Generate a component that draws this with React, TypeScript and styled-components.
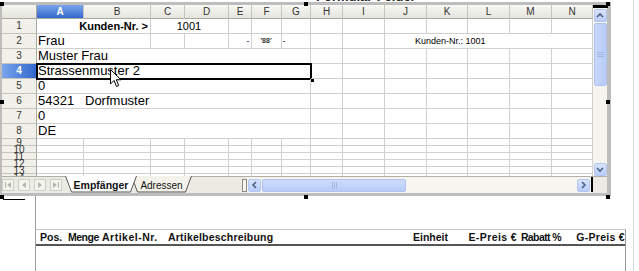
import React from 'react';
import styled, { createGlobalStyle, css } from 'styled-components';

const GlobalStyle = createGlobalStyle`
  html, body { margin: 0; padding: 0; background: #fff; }
  body { font-family: "Liberation Sans", Arial, sans-serif; }
  * { box-sizing: border-box; }
`;

const colWidths = [35, 47, 67, 34, 44, 23, 30, 29, 32, 42, 42, 41, 42, 42, 41];
const letters = 'ABCDEFGHIJKLMN'.split('');

const Page = styled.div`
  position: relative;
  width: 639px;
  height: 271px;
  overflow: hidden;
  display: flex;
  background: #fff;
`;

const Content = styled.div`
  width: 633px;
  display: flex;
  flex-direction: column;
  padding-top: 2px;
`;

const PageEdge = styled.div`
  flex: 1;
  border-left: 1px solid #d9d9d9;
`;

const Caption = styled.div`
  position: absolute;
  top: -11px;
  left: 316px;
  font-size: 13px;
  font-weight: bold;
  color: #222;
`;

const Frame = styled.div`
  position: relative;
  width: 611px;
  height: 194px;
  border-style: solid;
  border-color: #bdbdbd;
  border-width: 3px 4px 3px 2px;
  display: flex;
  flex-direction: column;
  background: #fff;
`;

const Handle = styled.span<{ $x: number; $y: number }>`
  position: absolute;
  width: 4px;
  height: 4px;
  background: #000;
  left: ${p => p.$x}px;
  top: ${p => p.$y}px;
`;

const TopArea = styled.div`
  display: flex;
  height: 171px;
`;

const Sheet = styled.div`
  display: grid;
  grid-template-columns: ${colWidths.map(w => w + 'px').join(' ')};
  grid-template-rows: 14px repeat(8, 15px) repeat(6, 7px);
  width: 591px;
  height: 171px;
  overflow: hidden;
`;

const Corner = styled.div`
  background: linear-gradient(#f6f6f2, #e4e3dc);
  border-right: 1px solid #a9a9a0;
  border-bottom: 1px solid #a9a9a0;
`;

const ColHead = styled.div<{ $active?: boolean }>`
  display: flex;
  align-items: center;
  justify-content: center;
  font-size: 10px;
  color: #333;
  background: linear-gradient(#f8f8f4, #e5e4dd);
  border-right: 1px solid #c6c5bd;
  border-bottom: 1px solid #a9a9a0;
  ${p => p.$active && css`
    background: linear-gradient(#7aa5ec, #3367cc);
    color: #fff;
    font-weight: bold;
  `}
`;

const RowHead = styled.div<{ $active?: boolean; $tight?: boolean }>`
  display: flex;
  align-items: center;
  justify-content: center;
  font-size: 10px;
  line-height: ${p => (p.$tight ? '7px' : '14px')};
  color: #333;
  background: #f1f0ea;
  border-right: 1px solid #a9a9a0;
  border-bottom: 1px solid #c6c5bd;
  ${p => p.$active && css`
    background: linear-gradient(90deg, #7aa5ec, #3367cc);
    color: #fff;
    font-weight: bold;
  `}
`;

type Align = 'left' | 'right' | 'center';

const Cell = styled.div<{
  $span?: number;
  $align?: Align;
  $bold?: boolean;
  $size?: number;
  $pad?: number;
  $noRight?: boolean;
  $selected?: boolean;
}>`
  position: relative;
  grid-column: span ${p => p.$span ?? 1};
  border-right: ${p => (p.$noRight ? 'none' : '1px solid #d0d0d0')};
  border-bottom: 1px solid #d0d0d0;
  font-size: ${p => p.$size ?? 13}px;
  font-weight: ${p => (p.$bold ? 'bold' : 'normal')};
  line-height: 14px;
  text-align: ${p => p.$align ?? 'left'};
  padding: 0 2px 0 ${p => p.$pad ?? 1}px;
  white-space: nowrap;
  color: #000;
  ${p => p.$selected && css`
    &::after {
      content: '';
      position: absolute;
      left: -1px;
      top: -1px;
      right: -2px;
      bottom: -2px;
      border: 2px solid #000;
    }
    &::before {
      content: '';
      position: absolute;
      right: -4px;
      bottom: -4px;
      width: 4px;
      height: 4px;
      background: #000;
    }
  `}
`;

const Marks = styled.span<{ $align: Align }>`
  display: block;
  font-size: 7px;
  font-weight: bold;
  text-align: ${p => p.$align};
  line-height: 14px;
  color: #333;
`;

const VScroll = styled.div`
  width: 14px;
  display: flex;
  flex-direction: column;
  align-items: center;
  background: #f5f4ee;
`;

const SplitBar = styled.div<{ $vertical?: boolean }>`
  background: #000;
  ${p => (p.$vertical ? css`width: 2px; height: 15px;` : css`width: 15px; height: 3px; margin-bottom: 1px;`)}
`;

const ArrowButton = styled.div`
  width: 13px;
  height: 13px;
  display: flex;
  align-items: center;
  justify-content: center;
  background: linear-gradient(#d8e3fd, #b9cdf9);
  border: 1px solid #b3c6f1;
  border-radius: 2px;
  flex-shrink: 0;
`;

const VThumb = styled.div`
  width: 13px;
  height: 63px;
  margin-top: 1px;
  display: flex;
  align-items: center;
  justify-content: center;
  background: linear-gradient(90deg, #c9d8fc, #b8ccf8);
  border: 1px solid #aec3f2;
  border-radius: 2px;
`;

const Track = styled.div`
  flex: 1;
`;

const TabBar = styled.div`
  height: 17px;
  display: flex;
  align-items: stretch;
  background: #ecebe3;
  border-top: 1px solid #b0afa6;
`;

const NavGroup = styled.div`
  display: flex;
  gap: 4px;
  align-items: center;
  width: 60px;
`;

const NavButton = styled.div`
  width: 12px;
  height: 12px;
  display: flex;
  align-items: center;
  justify-content: center;
  background: #f4f4ef;
  border: 1px solid #cfcec6;
`;

const Tabs = styled.div`
  display: flex;
  margin-left: 3px;
  margin-top: -1px;
`;

const Tab = styled.div<{ $active?: boolean; $w: number }>`
  position: relative;
  width: ${p => p.$w}px;
  height: 17px;
  display: flex;
  align-items: center;
  justify-content: center;
  font-size: ${p => (p.$active ? 10.5 : 10)}px;
  font-weight: ${p => (p.$active ? 'bold' : 'normal')};
  color: #111;
  z-index: ${p => (p.$active ? 2 : 1)};
  margin-left: ${p => (p.$active ? 0 : -6)}px;
  & > svg { position: absolute; left: 0; top: 0; }
  & > span { position: relative; padding-top: 1px; }
`;

const Filler = styled.div`
  flex: 1;
`;

const Splitter = styled.div`
  width: 5px;
  margin: 2px 0 1px;
  background: #f6f5f0;
  border: 1px solid #8d8d86;
`;

const HScroll = styled.div`
  width: 344px;
  display: flex;
  align-items: center;
  gap: 1px;
  padding: 0 1px;
  background: #f6f5ef;
`;

const HThumb = styled.div`
  width: 144px;
  height: 13px;
  display: flex;
  align-items: center;
  justify-content: center;
  background: linear-gradient(#cddbfc, #b9ccf8);
  border: 1px solid #aec3f2;
  border-radius: 2px;
`;

const BottomCorner = styled.div`
  width: 14px;
  background: #ecebe3;
`;

const Lower = styled.div`
  flex: 1;
  display: flex;
`;

const Margin = styled.div`
  width: 35px;
  padding: 3px 0 0 3px;
`;

const Tick = styled.div`
  width: 22px;
  height: 1px;
  background: #000;
`;

const Body = styled.div`
  flex: 1;
  border-left: 1px solid #9c9c9c;
  display: flex;
  flex-direction: column;
  padding-right: 7px;
`;

const Table = styled.div`
  margin-top: 33px;
  flex: 1;
  border-top: 1px solid #c4c4c4;
  border-right: 1px solid #9a9a9a;
`;

const HeaderRow = styled.div`
  display: flex;
  height: 16px;
  align-items: center;
  padding-left: 4px;
  border-bottom: 2px solid #555;
`;

const HeadCell = styled.div<{ $w: number; $right?: boolean; $ls?: number }>`
  width: ${p => p.$w}px;
  flex-shrink: 0;
  font-size: 10.5px;
  font-weight: bold;
  letter-spacing: ${p => p.$ls ?? 0}px;
  color: #111;
  white-space: nowrap;
  text-align: ${p => (p.$right ? 'right' : 'left')};
`;

const Chevron = ({ dir }: { dir: 'up' | 'down' | 'left' | 'right' }) => {
  const pts = {
    up: '1,5 4,2 7,5',
    down: '1,2 4,5 7,2',
    left: '5,1 2,4 5,7',
    right: '2,1 5,4 2,7',
  }[dir];
  return (
    <svg width="8" height="8" viewBox="0 0 8 8">
      <polyline points={pts} fill="none" stroke="#4d6185" strokeWidth="1.6" />
    </svg>
  );
};

const Grip = ({ vertical }: { vertical?: boolean }) => (
  <svg width="7" height="7" viewBox="0 0 7 7">
    {[1, 3, 5].map(i =>
      vertical ? (
        <line key={i} x1="0" y1={i + 0.5} x2="7" y2={i + 0.5} stroke="#a3b8e8" />
      ) : (
        <line key={i} x1={i + 0.5} y1="0" x2={i + 0.5} y2="7" stroke="#a3b8e8" />
      ),
    )}
  </svg>
);

const NavIcon = ({ kind }: { kind: 'first' | 'prev' | 'next' | 'last' }) => (
  <svg width="8" height="8" viewBox="0 0 8 8">
    {kind === 'first' && <><rect x="1" y="1" width="1" height="6" fill="#b5b5b0" /><polygon points="7,1 3,4 7,7" fill="#b5b5b0" /></>}
    {kind === 'prev' && <polygon points="6,1 2,4 6,7" fill="#b5b5b0" />}
    {kind === 'next' && <polygon points="2,1 6,4 2,7" fill="#b5b5b0" />}
    {kind === 'last' && <><polygon points="1,1 5,4 1,7" fill="#b5b5b0" /><rect x="6" y="1" width="1" height="6" fill="#b5b5b0" /></>}
  </svg>
);

const TabShape = ({ w, fill }: { w: number; fill: string }) => (
  <svg width={w} height="17" viewBox={`0 0 ${w} 17`}>
    <polygon points={`0,0 ${w},0 ${w - 6},16 6,16`} fill={fill} />
    <polyline points={`0.5,0 6.5,16 ${w - 6.5},16 ${w - 0.5},0`} fill="none" stroke="#555" />
  </svg>
);

const Cursor = styled.svg`
  position: absolute;
  left: 110px;
  top: 69px;
`;

type CellDef = {
  span?: number;
  text?: string;
  align?: Align;
  bold?: boolean;
  size?: number;
  pad?: number;
  noRight?: boolean;
  selected?: boolean;
  mark?: { t: string; a: Align };
};

const singles = (n: number): CellDef[] => Array.from({ length: n }, () => ({}));

const rows: CellDef[][] = [
  [
    { span: 2, text: 'Kunden-Nr. >', align: 'right', bold: true, size: 11 },
    { span: 2, text: '1001', align: 'center', size: 11 },
    ...singles(10),
  ],
  [
    { span: 2, text: 'Frau' },
    ...singles(2),
    { mark: { t: '-', a: 'right' } },
    { mark: { t: "'88'", a: 'center' } },
    { mark: { t: '-', a: 'left' } },
    ...singles(2),
    { span: 5, text: 'Kunden-Nr.: 1001', size: 9, pad: 30 },
  ],
  [{ span: 7, text: 'Muster Frau' }, ...singles(7)],
  [{ span: 7, text: 'Strassenmuster 2', selected: true }, ...singles(7)],
  [{ span: 7, text: '0' }, ...singles(7)],
  [{ text: '54321', noRight: true }, { span: 6, text: 'Dorfmuster' }, ...singles(7)],
  [{ span: 7, text: '0' }, ...singles(7)],
  [{ span: 7, text: 'DE' }, ...singles(7)],
  ...Array.from({ length: 6 }, () => singles(14)),
];

export default function App() {
  const handles: [number, number][] = [
    [-2, -3], [302, -3], [604, -3],
    [-2, 95], [604, 95],
    [-2, 190], [302, 190], [604, 190],
  ];
  return (
    <Page>
      <GlobalStyle />
      <Caption>Formular-Felder</Caption>
      <Content>
        <Frame>
          {handles.map(([x, y], i) => (
            <Handle key={i} $x={x} $y={y} />
          ))}
          <TopArea>
            <Sheet>
              <Corner />
              {letters.map(l => (
                <ColHead key={l} $active={l === 'A'}>{l}</ColHead>
              ))}
              {rows.map((cells, r) => (
                <React.Fragment key={r}>
                  <RowHead $active={r === 3} $tight={r >= 8}>{r + 1}</RowHead>
                  {cells.map((c, i) => (
                    <Cell
                      key={i}
                      $span={c.span}
                      $align={c.align}
                      $bold={c.bold}
                      $size={c.size}
                      $pad={c.pad}
                      $noRight={c.noRight}
                      $selected={c.selected}
                    >
                      {c.mark ? <Marks $align={c.mark.a}>{c.mark.t}</Marks> : c.text}
                    </Cell>
                  ))}
                </React.Fragment>
              ))}
            </Sheet>
            <VScroll>
              <SplitBar />
              <ArrowButton><Chevron dir="up" /></ArrowButton>
              <VThumb><Grip vertical /></VThumb>
              <Track />
              <ArrowButton><Chevron dir="down" /></ArrowButton>
            </VScroll>
          </TopArea>
          <TabBar>
            <NavGroup>
              <NavButton><NavIcon kind="first" /></NavButton>
              <NavButton><NavIcon kind="prev" /></NavButton>
              <NavButton><NavIcon kind="next" /></NavButton>
              <NavButton><NavIcon kind="last" /></NavButton>
            </NavGroup>
            <Tabs>
              <Tab $active $w={72}>
                <TabShape w={72} fill="#ffffff" />
                <span>Empfänger</span>
              </Tab>
              <Tab $w={61}>
                <TabShape w={61} fill="#f3f2ea" />
                <span>Adressen</span>
              </Tab>
            </Tabs>
            <Filler />
            <Splitter />
            <HScroll>
              <ArrowButton><Chevron dir="left" /></ArrowButton>
              <HThumb><Grip /></HThumb>
              <Track />
              <ArrowButton><Chevron dir="right" /></ArrowButton>
            </HScroll>
            <SplitBar $vertical />
            <BottomCorner />
          </TabBar>
        </Frame>
        <Lower>
          <Margin>
            <Tick />
          </Margin>
          <Body>
            <Table>
              <HeaderRow>
                <HeadCell $w={28}>Pos.</HeadCell>
                <HeadCell $w={34} $ls={-0.5}>Menge</HeadCell>
                <HeadCell $w={66} $ls={0.5}>Artikel-Nr.</HeadCell>
                <HeadCell $w={222} $ls={0.2}>Artikelbeschreibung</HeadCell>
                <HeadCell $w={58} $right>Einheit</HeadCell>
                <HeadCell $w={69} $right $ls={0.4}>E-Preis €</HeadCell>
                <HeadCell $w={44} $right $ls={-0.6}>Rabatt %</HeadCell>
                <HeadCell $w={64} $right $ls={0.3}>G-Preis €</HeadCell>
              </HeaderRow>
            </Table>
          </Body>
        </Lower>
      </Content>
      <PageEdge />
      <Cursor width="12" height="19" viewBox="0 0 12 19">
        <path d="M0.5 0.5 L0.5 15 L4 11.5 L6.5 17.5 L8.7 16.6 L6.3 10.8 L11 10.8 Z" fill="#fff" stroke="#000" strokeWidth="1" />
      </Cursor>
    </Page>
  );
}
